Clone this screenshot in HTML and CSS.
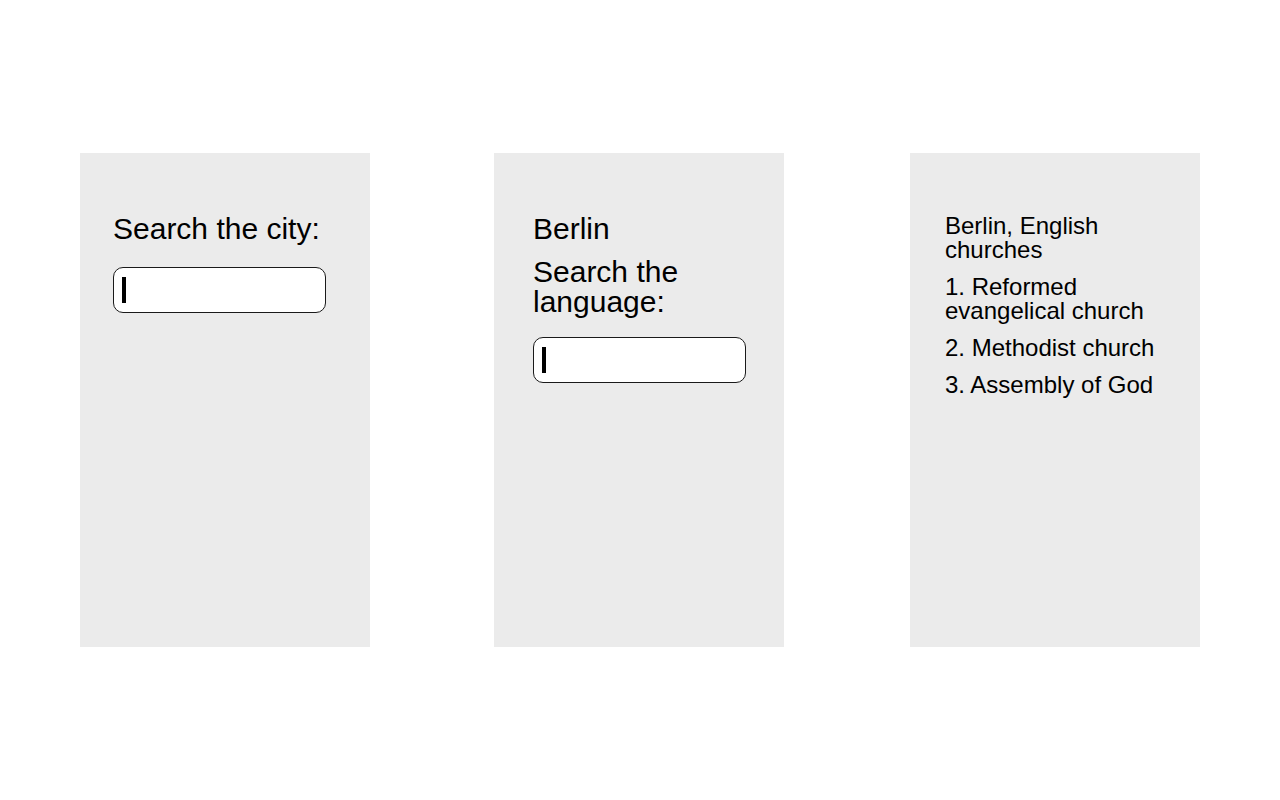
FILE: index.html
```html
<!DOCTYPE html>
<html lang="en">
<head>
<meta charset="utf-8">
<title>Church finder</title>
<link rel="stylesheet" href="styles.css">
</head>
<body>
<main class="screens">
  <section class="panel panel-city">
    <p class="label">Search the city:</p>
    <div class="field field-city"><span class="caret"></span></div>
  </section>
  <section class="panel panel-lang">
    <p class="label">Berlin</p>
    <p class="label label-gap">Search the language:</p>
    <div class="field field-lang"><span class="caret"></span></div>
  </section>
  <section class="panel panel-result">
    <p class="item">Berlin, English churches</p>
    <p class="item item-gap">1. Reformed evangelical church</p>
    <p class="item item-gap">2. Methodist church</p>
    <p class="item item-gap">3. Assembly of God</p>
  </section>
</main>
</body>
</html>
```
FILE: styles.css
```css
html, body {
  margin: 0;
  padding: 0;
  background: #ffffff;
}

body {
  font-family: "Liberation Sans", Arial, sans-serif;
  color: #000;
}

.screens {
  box-sizing: border-box;
  height: 800px;
  padding: 0 80px;
  display: flex;
  gap: 124px;
  align-items: center;
}

.panel {
  box-sizing: border-box;
  flex: 0 0 290px;
  height: 494px;
  background: #ebebeb;
  padding-top: 61px;
}

.panel-city {
  padding-left: 33px;
}

.panel-lang {
  padding-left: 39px;
  padding-right: 38px;
}

.panel-result {
  margin-left: 2px;
  padding-left: 35px;
  padding-right: 35px;
}

.label {
  margin: 0;
  font-size: 30px;
  line-height: 30px;
}

.label-gap {
  margin-top: 13px;
}

.field {
  box-sizing: border-box;
  width: 213px;
  height: 46px;
  background: #fff;
  border: 1px solid #1a1a1a;
  border-radius: 10px;
  padding: 9px 0 0 8px;
}

.field-city {
  margin-top: 23px;
}

.field-lang {
  margin-top: 20px;
}

.caret {
  display: block;
  width: 4px;
  height: 26px;
  background: #000;
}

.item {
  margin: 0;
  font-size: 24px;
  line-height: 24px;
}

.item-gap {
  margin-top: 13px;
}
```
